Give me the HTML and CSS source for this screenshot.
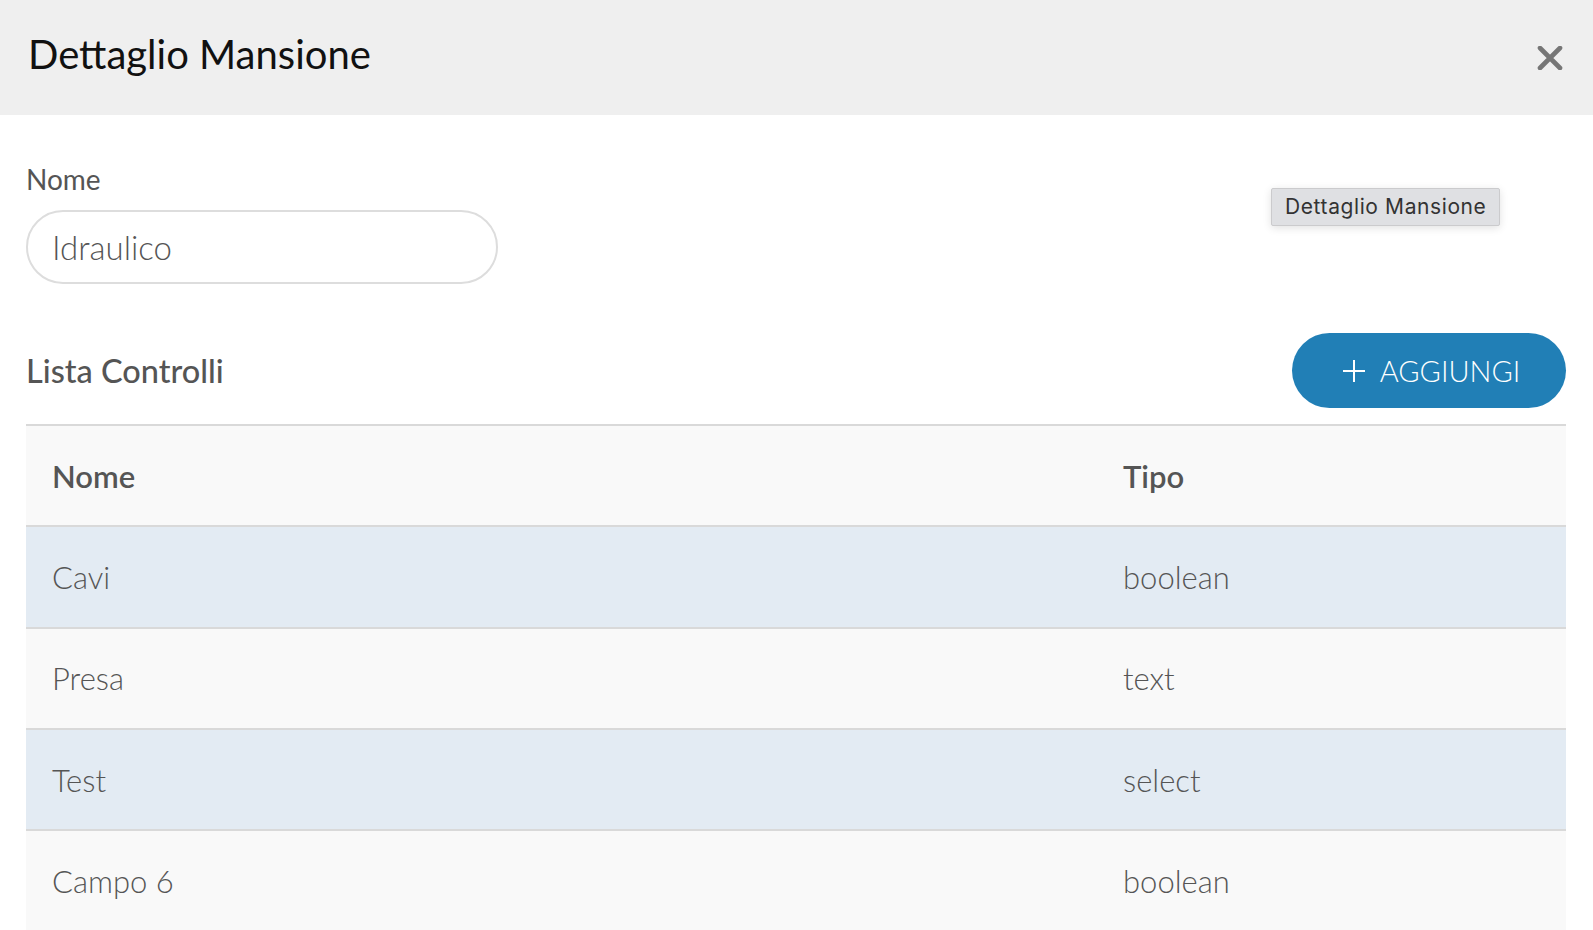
FILE: index.html
```html
<!DOCTYPE html>
<html>
<head>
    <title>Dettaglio Mansione</title>
    <link rel="stylesheet" href="styles.css">
</head>
<body>
    <div class="modal">
        <header class="modal-header">
            <h1>Dettaglio Mansione</h1>
            <button class="close" aria-label="Chiudi">
                <svg width="26" height="24" viewBox="0 0 26 24">
                    <path d="M3 2 L23 22 M23 2 L3 22" stroke="#767676" stroke-width="4.6" stroke-linecap="round"/>
                </svg>
            </button>
        </header>

        <div class="modal-body">
            <label class="field-label" for="nome">Nome</label>
            <input id="nome" class="field-input" type="text" value="Idraulico">

            <div class="tooltip">Dettaglio Mansione</div>

            <div class="section-head">
                <h2>Lista Controlli</h2>
                <button class="btn-add">
                    <svg width="24" height="24" viewBox="0 0 24 24">
                        <path d="M12 1 V23 M1 12 H23" stroke="#fff" stroke-width="2"/>
                    </svg>
                    AGGIUNGI
                </button>
            </div>

            <table class="controls">
                <thead>
                    <tr>
                        <th class="col-name">Nome</th>
                        <th>Tipo</th>
                    </tr>
                </thead>
                <tbody>
                    <tr class="alt"><td>Cavi</td><td>boolean</td></tr>
                    <tr><td>Presa</td><td>text</td></tr>
                    <tr class="alt"><td>Test</td><td>select</td></tr>
                    <tr><td>Campo 6</td><td>boolean</td></tr>
                </tbody>
            </table>
        </div>
    </div>
</body>
</html>
```

FILE: styles.css
```css
body {
    margin: 0;
    font-family: Lato, "Open Sans", sans-serif;
    color: #555;
    background: #fff;
    overflow: hidden;
}
.modal-header {
    height: 115px;
    background: #efefef;
    display: flex;
    align-items: center;
    justify-content: space-between;
    padding: 0 30px 0 28px;
}
.modal-header h1 {
    margin: 0;
    font-size: 40px;
    font-weight: 400;
    color: #111;
    padding-bottom: 8px;
}
.close {
    background: none;
    border: none;
    padding: 0;
    cursor: pointer;
    display: flex;
}
.modal-body {
    position: relative;
    padding: 48px 27px 0 26px;
}
.field-label {
    display: block;
    font-size: 28px;
    line-height: 32px;
    color: #555;
}
.field-input {
    display: block;
    box-sizing: border-box;
    margin-top: 15px;
    width: 472px;
    height: 74px;
    border: 2px solid #ddd;
    border-radius: 37px;
    padding: 0 24px;
    font-family: Lato, sans-serif;
    font-size: 33px;
    font-weight: 300;
    color: #555;
    outline: none;
}
.tooltip {
    position: absolute;
    left: 1271px;
    top: 73px;
    padding: 5px 13px 6px;
    background: #dfe0e3;
    border: 1px solid #cbcbcd;
    border-radius: 2px;
    box-shadow: 0 2px 8px rgba(0, 0, 0, 0.12);
    font-family: Inter, "Noto Sans", sans-serif;
    font-size: 21px;
    letter-spacing: 0.6px;
    color: #333;
}
.section-head {
    display: flex;
    align-items: center;
    justify-content: space-between;
    margin-top: 49px;
}
.section-head h2 {
    margin: 0;
    font-size: 32.5px;
    font-weight: 500;
    color: #555;
}
.btn-add {
    display: flex;
    align-items: center;
    gap: 14px;
    height: 75px;
    width: 274px;
    justify-content: center;
    padding: 0 0 0 4px;
    border: none;
    border-radius: 38px;
    background: #217fb6;
    color: #fff;
    font-family: Lato, sans-serif;
    font-size: 29px;
    font-weight: 300;
    cursor: pointer;
}
.controls {
    width: 100%;
    margin-top: 16px;
    border-collapse: collapse;
    border-top: 2px solid #d9d9d9;
}
.controls th,
.controls td {
    height: 99.3px;
    padding: 0 26px;
    text-align: left;
    font-size: 31px;
    color: #555;
    border-bottom: 2px solid #d9d9d9;
}
.controls th {
    font-weight: 600;
    background: #f9f9f9;
}
.controls td {
    font-weight: 300;
    background: #f9f9f9;
}
.controls tr.alt td {
    background: #e3ebf3;
}
.controls .col-name {
    width: 1019px;
}
```
